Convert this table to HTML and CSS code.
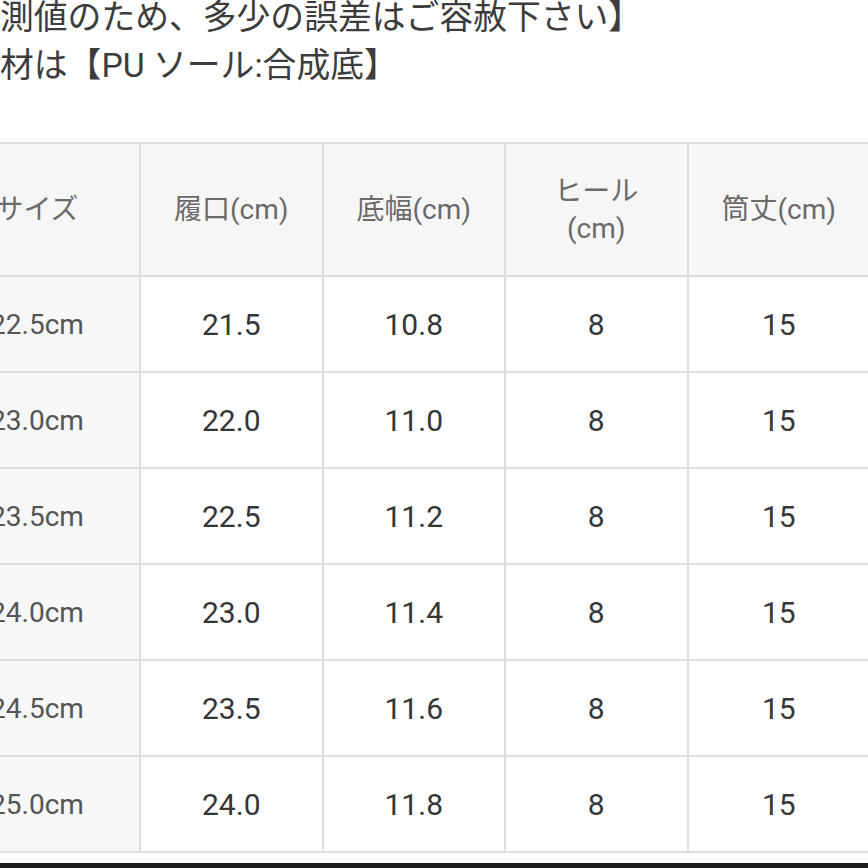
FILE: index.html
```html
<!DOCTYPE html>
<html lang="ja">
<head>
<meta charset="utf-8">
<link rel="stylesheet" href="styles.css">
</head>
<body>
<div class="page">
  <div class="notes">
    <p class="note">測値のため、多少の誤差はご容赦下さい】</p>
    <p class="note">材は【PU ソール:合成底】</p>
  </div>
  <table class="size-table">
    <colgroup>
      <col class="c-size">
      <col class="c-val">
      <col class="c-val">
      <col class="c-val">
      <col class="c-val">
    </colgroup>
    <thead>
      <tr>
        <th class="size">サイズ</th>
        <th>履口(cm)</th>
        <th>底幅(cm)</th>
        <th>ヒール<br>(cm)</th>
        <th>筒丈(cm)</th>
      </tr>
    </thead>
    <tbody>
      <tr><td class="size">22.5cm</td><td>21.5</td><td>10.8</td><td>8</td><td>15</td></tr>
      <tr><td class="size">23.0cm</td><td>22.0</td><td>11.0</td><td>8</td><td>15</td></tr>
      <tr><td class="size">23.5cm</td><td>22.5</td><td>11.2</td><td>8</td><td>15</td></tr>
      <tr><td class="size">24.0cm</td><td>23.0</td><td>11.4</td><td>8</td><td>15</td></tr>
      <tr><td class="size">24.5cm</td><td>23.5</td><td>11.6</td><td>8</td><td>15</td></tr>
      <tr><td class="size">25.0cm</td><td>24.0</td><td>11.8</td><td>8</td><td>15</td></tr>
    </tbody>
  </table>
  <div class="bottom-bar"></div>
</div>
</body>
</html>
```

FILE: styles.css
```css
html, body {
  margin: 0;
  padding: 0;
  background: #ffffff;
}
body {
  width: 868px;
  height: 868px;
  overflow: hidden;
  font-family: Roboto, "Noto Sans CJK JP", sans-serif;
}
.page {
  width: 868px;
  height: 868px;
  display: flex;
  flex-direction: column;
  overflow: hidden;
}
.notes {
  margin-top: -6px;
}
.note {
  margin: 0;
  font-size: 33.8px;
  line-height: 48px;
  color: #3c3c3c;
  white-space: nowrap;
}
.size-table {
  margin-top: 52px;
  margin-left: -67px;
  border-collapse: collapse;
  table-layout: fixed;
  width: 936px;
  flex: none;
}
.c-size { width: 206px; }
.c-val { width: 182.5px; }
.size-table th,
.size-table td {
  border: 2px solid #dedede;
  text-align: center;
  vertical-align: middle;
  padding: 0;
}
.size-table th {
  height: 131px;
  background: #f6f6f6;
  font-weight: normal;
  font-size: 28px;
  line-height: 37px;
  color: #6a6a6a;
}
.size-table td {
  height: 94px;
  font-size: 30px;
  color: #363636;
  background: #ffffff;
}
.size-table td.size {
  background: #f7f7f7;
  font-size: 28px;
  color: #555555;
}
.bottom-bar {
  margin-top: auto;
  height: 5px;
  background: #1e1e1e;
  flex: none;
}
```
